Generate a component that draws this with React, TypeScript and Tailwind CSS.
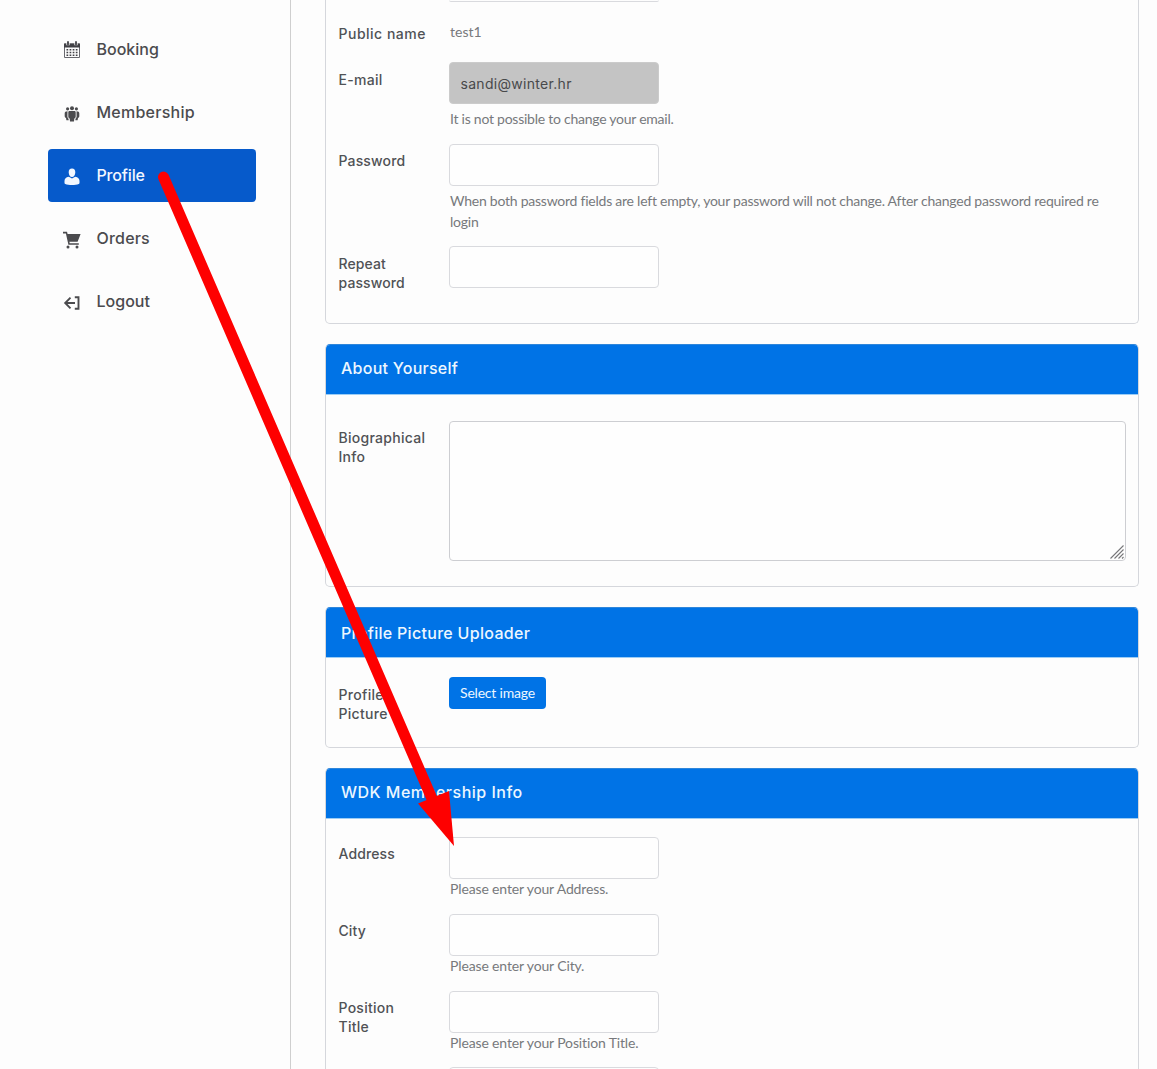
import type { ReactNode } from "react";

type MenuItem = {
  label: string;
  icon: ReactNode;
  spacing: string;
  active?: boolean;
};

const menu: MenuItem[] = [
  { label: "Booking", icon: <CalendarIcon />, spacing: "tracking-[0px]" },
  { label: "Membership", icon: <GroupIcon />, spacing: "tracking-[0.25px]" },
  { label: "Profile", icon: <UserIcon />, spacing: "tracking-[-0.15px]", active: true },
  { label: "Orders", icon: <CartIcon />, spacing: "tracking-[0.2px]" },
  { label: "Logout", icon: <LogoutIcon />, spacing: "tracking-[0px]" },
];

function CalendarIcon() {
  return (
    <svg width="18" height="18" viewBox="0 0 18 18" fill="none">
      <path d="M1.500 3h15v13.500h-15z" stroke="#68686e" strokeWidth="1" />
      <path d="M1 2.500h16v4H1z" fill="#414146" />
      <path d="M5 0v4.200M13 0v4.200" stroke="#fdfdfd" strokeWidth="3.200" />
      <path d="M5 1v2.500M13 1v2.500" stroke="#414146" strokeWidth="1.800" strokeLinecap="round" />
      <path
        d="M3.500 8.800h11.500M3.500 11.500h11.500M3.500 14.200h11.500"
        stroke="#414146"
        strokeWidth="1.600"
        strokeDasharray="1.700 1.400"
      />
    </svg>
  );
}

function GroupIcon() {
  return (
    <svg width="18" height="18" viewBox="0 0 18 18" fill="currentColor">
      <circle cx="9" cy="3.200" r="2" />
      <circle cx="4.600" cy="3.800" r="1.600" />
      <circle cx="13.400" cy="3.800" r="1.600" />
      <path d="M6.500 6h5c.8 0 1.200.6 1.200 1.400v4.200c0 1-.6 1.700-1.400 2L11 16.400H7l-.3-2.800c-.8-.3-1.400-1-1.400-2V7.400C5.300 6.600 5.700 6 6.500 6z" />
      <path d="M4.500 6.200c-1.900 0-2.800.8-2.800 2.300v2.800c0 .9.600 1.500 1.300 1.700l.4 2.300h2.300l-.2-1.500c-.7-.5-1.100-1.300-1.100-2.200zM13.500 6.200c1.900 0 2.800.8 2.800 2.300v2.800c0 .9-.6 1.500-1.300 1.700l-.4 2.300h-2.300l.2-1.500c.7-.5 1.100-1.300 1.100-2.200z" />
    </svg>
  );
}

function UserIcon() {
  return (
    <svg width="18" height="18" viewBox="0 0 18 18" fill="currentColor">
      <path d="M9 .6c2.200 0 3.400 1.600 3.300 3.800C12.200 6.900 10.900 8.900 9 8.900S5.800 6.900 5.700 4.400C5.600 2.200 6.800.6 9 .6z" />
      <path d="M5.800 8.800L9 10.600l3.200-1.800c2.900.3 4.300 2 4.300 4.200v2c0 .5-.2.800-.7 1-1.900.8-4.200 1.100-6.800 1.100S4.100 16.800 2.200 16c-.5-.2-.7-.5-.7-1v-2c0-2.200 1.400-3.900 4.300-4.200z" />
    </svg>
  );
}

function CartIcon() {
  return (
    <svg width="18" height="18" viewBox="0 0 18 18" fill="currentColor">
      <path d="M0 .8h4l.6 2.200h13l-3 7.800H6.400l.3 1.400h9.100v1.600H5.400L2.900 2.500H0z" />
      <circle cx="5" cy="16" r="1.500" />
      <circle cx="14" cy="16" r="1.500" />
    </svg>
  );
}

function LogoutIcon() {
  return (
    <svg width="18" height="18" viewBox="0 0 18 18" fill="none" stroke="currentColor" strokeWidth="1.900">
      <path d="M12 9H2.500M7.500 3.700L2.200 9l5.300 5.300M11.800 3.200h3.700v11.600h-3.700" />
    </svg>
  );
}

function Card({ title, spacing, children }: { title: string; spacing: string; children: ReactNode }) {
  return (
    <section className="shrink-0 overflow-hidden rounded-[5px] border border-[#d5d7dc] border-t-[#2f86da]">
      <h2
        className={`h-[50px] border-b border-[#9ccdf5] bg-[#0073e6] px-[15px] text-base font-medium whitespace-nowrap text-[#edf7ff] ${spacing}`}
      >
        {title}
      </h2>
      {children}
    </section>
  );
}

function Label({ children, className = "tracking-[0.2px]" }: { children: ReactNode; className?: string }) {
  return (
    <label className={`w-[111px] shrink-0 pt-[7.5px] pl-[0.5px] text-sm leading-[19px] font-medium text-[#505255] ${className}`}>
      {children}
    </label>
  );
}

function TextField({ value = "", disabled = false }: { value?: string; disabled?: boolean }) {
  return (
    <input
      value={value}
      readOnly
      className={`block h-[42px] w-[210px] rounded-[4px] border px-[10.5px] text-sm tracking-[0.3px] ${
        disabled ? "border-[#cbcbcb] bg-[#c4c4c4] text-[#48494b]" : "border-[#d9dade] bg-[#fefefe]"
      }`}
    />
  );
}

function Help({ children, className = "tracking-[-0.14px]" }: { children: ReactNode; className?: string }) {
  return <p className={`pl-px font-[Lato,sans-serif] text-sm text-[#77797c] ${className}`}>{children}</p>;
}

const memberFields = [
  { label: "Address", help: "Please enter your Address.", spacing: "-mt-px tracking-[0.1px]" },
  { label: "City", help: "Please enter your City.", spacing: "tracking-[0.1px]" },
  { label: "Position Title", help: "Please enter your Position Title.", spacing: "tracking-[0.25px]" },
];

export default function App() {
  return (
    <div className="relative flex h-[1069px] w-[1157px] overflow-hidden bg-[#fdfdfd] font-[Inter,sans-serif]">
      <aside className="w-[291px] shrink-0 border-r border-[#cfcfcf] pt-[22.3px] pl-12">
        <nav className="flex w-[208px] flex-col gap-2.5">
          {menu.map((item) => (
            <a
              key={item.label}
              className={`flex h-[53.2px] items-center rounded-[4px] pl-[15px] text-base font-medium ${
                item.active ? "bg-[#065acb] text-[#f2f7ff]" : "text-[#4b4b4e]"
              }`}
            >
              <span className="mt-[3px] w-[33.5px] shrink-0">{item.icon}</span>
              <span className={`-mt-[0.6px] ${item.spacing}`}>{item.label}</span>
            </a>
          ))}
        </nav>
      </aside>

      <main className="ml-[34px] flex w-[814px] shrink-0 flex-col gap-5">
        {/* account details, scrolled past its header */}
        <section className="h-[324px] shrink-0 rounded-b-[5px] border border-t-0 border-[#d5d7dc] pl-3">
          <div className="ml-[111px] h-0.5 w-[210px] rounded-b-[4px] border-b border-[#d9dade]" />
          <div className="flex h-[60px]">
            <div className="mt-3.5 flex">
              <Label className="tracking-[0.5px]">Public name</Label>
            </div>
            <Help className="pt-5">test1</Help>
          </div>
          <div className="flex h-[82px]">
            <Label className="tracking-[0.3px]">E-mail</Label>
            <div>
              <TextField value="sandi@winter.hr" disabled />
              <Help className="mt-[5px] tracking-[-0.25px]">It is not possible to change your email.</Help>
            </div>
          </div>
          <div className="flex h-[102px]">
            <Label className="-mt-px tracking-[0.15px]">Password</Label>
            <div>
              <TextField />
              <Help className="mt-1 w-[670px] leading-[21px] tracking-[-0.24px]">
                When both password fields are left empty, your password will not change. After changed password required re
                login
              </Help>
            </div>
          </div>
          <div className="flex">
            <Label className="tracking-[0.1px]">
              Repeat
              <br />
              password
            </Label>
            <TextField />
          </div>
        </section>

        <Card title="About Yourself" spacing="leading-[47px] tracking-[0.25px]">
          <div className="flex h-[191px] pt-[26px] pl-3">
            <Label className="-mt-px tracking-[0.28px]">
              Biographical
              <br />
              Info
            </Label>
            <div className="relative h-[140px] w-[677px]">
              <textarea className="block h-full w-full resize-none rounded-[4px] border border-[#cdced2] bg-[#fefefe]" />
              {/* resize grip */}
              <svg className="absolute right-[2px] bottom-[2px]" width="14" height="14" viewBox="0 0 14 14">
                <path d="M.5 13.500L13.500 .5M4.500 13.500l9-9M8.500 13.500l5-5M12 13.500l1.500-1.500" stroke="#77777a" strokeWidth="1.100" />
              </svg>
            </div>
          </div>
        </Card>

        <Card title="Profile Picture Uploader" spacing="leading-[50px] tracking-[0.3px]">
          <div className="flex h-[89px] pt-[19px] pl-3">
            <Label className="tracking-[0.3px]">
              Profile
              <br />
              Picture
            </Label>
            <button className="h-8 w-[97px] rounded-[4px] bg-[#0073e6] font-[Lato,sans-serif] text-sm tracking-[-0.2px] whitespace-nowrap text-[#edf7ff]">
              Select image
            </button>
          </div>
        </Card>

        <Card title="WDK Membership Info" spacing="leading-[47px] tracking-[0.5px]">
          <div className="pt-[18px] pl-3">
            {memberFields.map((field) => (
              <div key={field.label} className="flex h-[76.75px]">
                <Label className={field.spacing}>
                  <span className="block w-20">{field.label}</span>
                </Label>
                <div>
                  <TextField />
                  <Help>{field.help}</Help>
                </div>
              </div>
            ))}
            <div className="ml-[111px]">
              <TextField />
            </div>
          </div>
        </Card>
      </main>

      {/* pointer from the menu entry to the first membership field */}
      <svg className="pointer-events-none absolute inset-0" width="1157" height="1069" viewBox="0 0 1157 1069">
        <path d="M163.500 177L433 801" stroke="#fe0000" strokeWidth="11" strokeLinecap="round" />
        <path d="M454 846L418 803.500L449 791z" fill="#fe0000" />
      </svg>
    </div>
  );
}
